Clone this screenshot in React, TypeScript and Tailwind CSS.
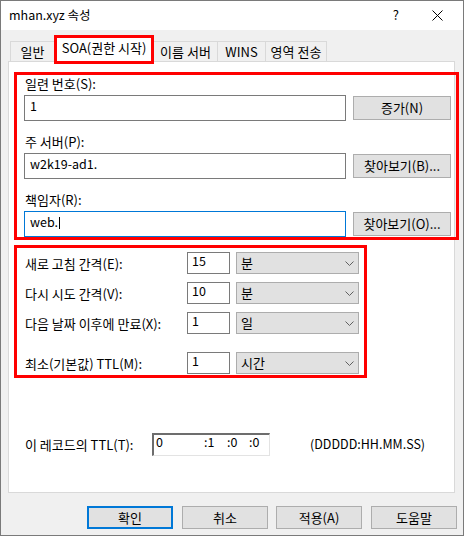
import React from "react";

function Chevron() {
  return (
    <svg width="9" height="5" viewBox="0 0 9 5" className="block">
      <path d="M0.5 0.5 L4.5 4.5 L8.5 0.5" fill="none" stroke="#606060" strokeWidth="1" />
    </svg>
  );
}

function Btn({ label, primary, w = 98, h = 24 }: { label: string; primary?: boolean; w?: number; h?: number }) {
  return (
    <div
      className={
        "flex items-center justify-center bg-[#e1e1e1] " +
        (primary ? "border-2 border-[#0078d7]" : "border border-[#adadad]")
      }
      style={{ width: w, height: h }}
    >
      <span className="pb-[1px]">{label}</span>
    </div>
  );
}

function TextRow({ value, focused, btn }: { value: string; focused?: boolean; btn: string }) {
  return (
    <div className="flex items-center h-[26px]">
      <div
        className={
          "w-[322px] h-[26px] bg-white border flex items-center pl-[5px] pb-[4px] text-[12.5px] " +
          (focused ? "border-[#0078d7]" : "border-[#7a7a7a]")
        }
      >
        <span>{value}</span>
        {focused && <span className="inline-block w-[1px] h-[12px] bg-black ml-[1px] mt-[2px]" />}
      </div>
      <div className="ml-[7px]">
        <Btn label={btn} />
      </div>
    </div>
  );
}

function IntervalRow({ label, value, unit }: { label: string; value: string; unit: string }) {
  return (
    <div className="flex items-center h-[22px]">
      <div className="w-[170px] pl-[8px]">{label}</div>
      <div className="w-[43px] h-[22px] bg-white border border-[#7a7a7a] flex items-center pl-[4px] pb-[3px] text-[12.5px]">
        {value}
      </div>
      <div className="ml-[6px] w-[123px] h-[22px] bg-[#e1e1e1] border border-[#adadad] flex items-center pl-[4px] pr-[4px]">
        <span className="pb-[2px]">{unit}</span>
        <span className="ml-auto">
          <Chevron />
        </span>
      </div>
    </div>
  );
}

export default function App() {
  return (
    <div className="w-[465px] h-[537px] bg-white font-['Noto_Sans_CJK_KR',sans-serif] text-[13px] leading-none text-black">
      <div className="w-[464px] h-[536px] border border-[#7a7a7a] flex flex-col">
        {/* title bar */}
        <div className="h-[29px] bg-white flex items-center pl-[8px] pr-[20px] shrink-0">
          <span className="pb-[1px] text-[12.5px]">mhan.xyz 속성</span>
          <span className="ml-auto text-[13px] pb-[2px]">?</span>
          <svg width="11" height="11" viewBox="0 0 11 11" className="ml-[33px]">
            <path d="M0.5 0.5 L10.5 10.5 M10.5 0.5 L0.5 10.5" stroke="#000" strokeWidth="1" />
          </svg>
        </div>

        {/* body */}
        <div className="flex-1 bg-[#f0f0f0] flex flex-col">
          {/* tabs */}
          <div className="mt-[5px] h-[26px] flex items-end pl-[9px] shrink-0">
            <div className="w-[44px] h-[20px] border-t border-l border-[#d9d9d9] flex items-center justify-center pb-[1px]">
              일반
            </div>
            <div className="self-start relative z-10 w-[100px] h-[29px] bg-white border-[3px] border-[#ff0000] flex items-center justify-center pb-[5px]">
              SOA(권한 시작)
            </div>
            <div className="w-[63px] h-[20px] border-t border-[#d9d9d9] flex items-center justify-center pb-[1px]">
              이름 서버
            </div>
            <div className="w-[48px] h-[20px] border-t border-l border-[#d9d9d9] flex items-center justify-center pb-[1px]">
              WINS
            </div>
            <div className="w-[62px] h-[20px] border-t border-l border-r border-[#d9d9d9] flex items-center justify-center pb-[1px]">
              영역 전송
            </div>
          </div>

          {/* panel */}
          <div className="ml-[7px] w-[447px] h-[432px] bg-white border border-[#d9d9d9] flex flex-col shrink-0">
            {/* red box 1 */}
            <div className="mt-[10px] ml-[5px] w-[445px] h-[168px] border-[3px] border-[#ff0000] pl-[7px] flex flex-col shrink-0">
              <div className="h-[16px] pl-[1px] flex items-center">일련 번호(S):</div>
              <div className="mt-[4px]">
                <TextRow value="1" btn="증가(N)" />
              </div>
              <div className="mt-[12px] h-[16px] pl-[1px] flex items-center">주 서버(P):</div>
              <div className="mt-[4px]">
                <TextRow value="w2k19-ad1." btn="찾아보기(B)..." />
              </div>
              <div className="mt-[12px] h-[16px] pl-[1px] flex items-center">책임자(R):</div>
              <div className="mt-[4px]">
                <TextRow value="web." focused btn="찾아보기(O)..." />
              </div>
            </div>

            {/* red box 2 */}
            <div className="mt-[5px] ml-[5px] w-[353px] h-[133px] border-[3px] border-[#ff0000] pt-[4px] flex flex-col shrink-0">
              <IntervalRow label="새로 고침 간격(E):" value="15" unit="분" />
              <div className="mt-[8px]">
                <IntervalRow label="다시 시도 간격(V):" value="10" unit="분" />
              </div>
              <div className="mt-[8px]">
                <IntervalRow label="다음 날짜 이후에 만료(X):" value="1" unit="일" />
              </div>
              <div className="mt-[18px]">
                <IntervalRow label="최소(기본값) TTL(M):" value="1" unit="시간" />
              </div>
            </div>

            {/* TTL row */}
            <div className="mt-[55px] h-[23px] flex items-center shrink-0">
              <div className="w-[143px] pl-[16px]">이 레코드의 TTL(T):</div>
              <div className="w-[118px] h-[23px] bg-white border-t-2 border-l-2 border-[#6d6d6d] border-b border-r border-b-[#e3e3e3] border-r-[#e3e3e3] flex items-center pl-[2px] pb-[6px] text-[12.5px]">
                <span className="w-[48px]">0</span>
                <span className="w-[23px]">:1</span>
                <span className="w-[22px]">:0</span>
                <span>:0</span>
              </div>
              <div className="ml-[40px] text-[12.5px]">(DDDDD:HH.MM.SS)</div>
            </div>
          </div>

          {/* bottom buttons */}
          <div className="mt-[13px] flex items-center pl-[86px]">
            <Btn label="확인" primary w={86} h={23} />
            <div className="ml-[9px]">
              <Btn label="취소" w={86} h={23} />
            </div>
            <div className="ml-[8px]">
              <Btn label="적용(A)" w={86} h={23} />
            </div>
            <div className="ml-[9px]">
              <Btn label="도움말" w={86} h={23} />
            </div>
          </div>
        </div>
      </div>
    </div>
  );
}
